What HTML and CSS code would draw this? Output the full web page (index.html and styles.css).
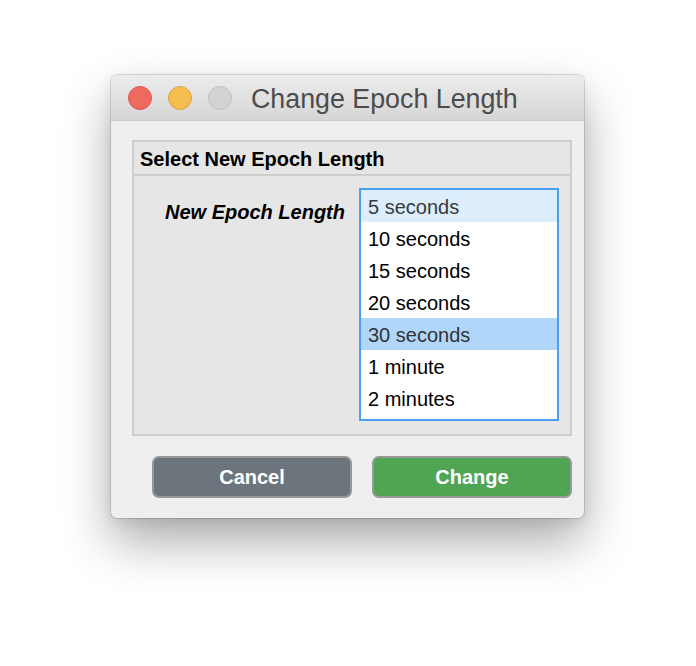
FILE: index.html
```html
<!DOCTYPE html>
<html>
<head>
<meta charset="utf-8">
<link rel="stylesheet" href="styles.css">
</head>
<body>
<div class="stage">
  <div class="window">
    <div class="titlebar">
      <div class="lights">
        <span class="light red"></span>
        <span class="light yellow"></span>
        <span class="light gray"></span>
      </div>
      <div class="title">Change Epoch Length</div>
    </div>
    <div class="content">
      <div class="group">
        <div class="group-header">Select New Epoch Length</div>
        <div class="group-body">
          <div class="field-label">New Epoch Length</div>
          <div class="listbox">
            <div class="item hover">5 seconds</div>
            <div class="item">10 seconds</div>
            <div class="item">15 seconds</div>
            <div class="item">20 seconds</div>
            <div class="item selected">30 seconds</div>
            <div class="item">1 minute</div>
            <div class="item">2 minutes</div>
          </div>
        </div>
      </div>
      <div class="buttons">
        <div class="btn cancel">Cancel</div>
        <div class="btn change">Change</div>
      </div>
    </div>
  </div>
</div>
</body>
</html>
```

FILE: styles.css
```css
html, body {
  margin: 0;
  padding: 0;
  background: #ffffff;
  font-family: "Liberation Sans", Arial, sans-serif;
}
body {
  min-height: 666px;
}
.stage {
  padding: 75px 0 0 111px;
  height: 591px;
}
.window {
  width: 473px;
  height: 443px;
  box-sizing: border-box;
  background: #efefef;
  border-radius: 6px;
  box-shadow: 0 0 0 1px rgba(0,0,0,0.13), 0 24px 50px rgba(0,0,0,0.33), 0 4px 14px rgba(0,0,0,0.08);
  overflow: hidden;
}
.titlebar {
  height: 46px;
  box-sizing: border-box;
  border-bottom: 1px solid #c9c9c9;
  background: linear-gradient(#ececec, #d6d6d6);
  display: flex;
  align-items: center;
  padding-left: 17px;
}
.lights {
  display: flex;
  gap: 16px;
}
.light {
  width: 24px;
  height: 24px;
  box-sizing: border-box;
  border-radius: 50%;
  display: block;
}
.red { background: #ee6a5f; border: 1px solid #d9584d; }
.yellow { background: #f6bd4f; border: 1px solid #dba444; }
.gray { background: #d3d3d3; border: 1px solid #c2c2c2; }
.title {
  margin-left: 19px;
  font-size: 26.8px;
  color: #4c4c4c;
  line-height: 1;
  padding-top: 4px;
}
.content {
  padding: 19px 12px 20px 21px;
}
.group {
  border: 2px solid #cecece;
  background: #e6e6e6;
}
.group-header {
  height: 32px;
  line-height: 34px;
  border-bottom: 2px solid #cecece;
  padding-left: 6px;
  font-weight: bold;
  font-size: 20px;
  color: #000;
}
.group-body {
  display: flex;
  justify-content: flex-end;
  align-items: flex-start;
  gap: 14px;
  padding: 12px 11px 13px 0;
}
.field-label {
  margin-top: 8px;
  line-height: 32px;
  font-size: 20px;
  font-weight: bold;
  font-style: italic;
  color: #000;
}
.listbox {
  width: 200px;
  box-sizing: border-box;
  border: 2px solid #4a9ff5;
  background: #ffffff;
  padding-bottom: 5px;
}
.item {
  height: 32px;
  line-height: 34px;
  padding-left: 7px;
  font-size: 20px;
  color: #000;
}
.item.hover {
  background: #dcedfc;
  color: #3a3a3a;
}
.item.selected {
  background: #b0d7fa;
  color: #333333;
}
.buttons {
  display: flex;
  gap: 20px;
  margin-top: 20px;
  padding-left: 20px;
}
.btn {
  width: 200px;
  height: 42px;
  box-sizing: border-box;
  border: 2px solid #989898;
  border-radius: 7px;
  color: #ffffff;
  font-weight: bold;
  font-size: 20px;
  text-align: center;
  line-height: 39px;
}
.cancel { background: #6c757c; }
.change { background: #4fa553; }
```
